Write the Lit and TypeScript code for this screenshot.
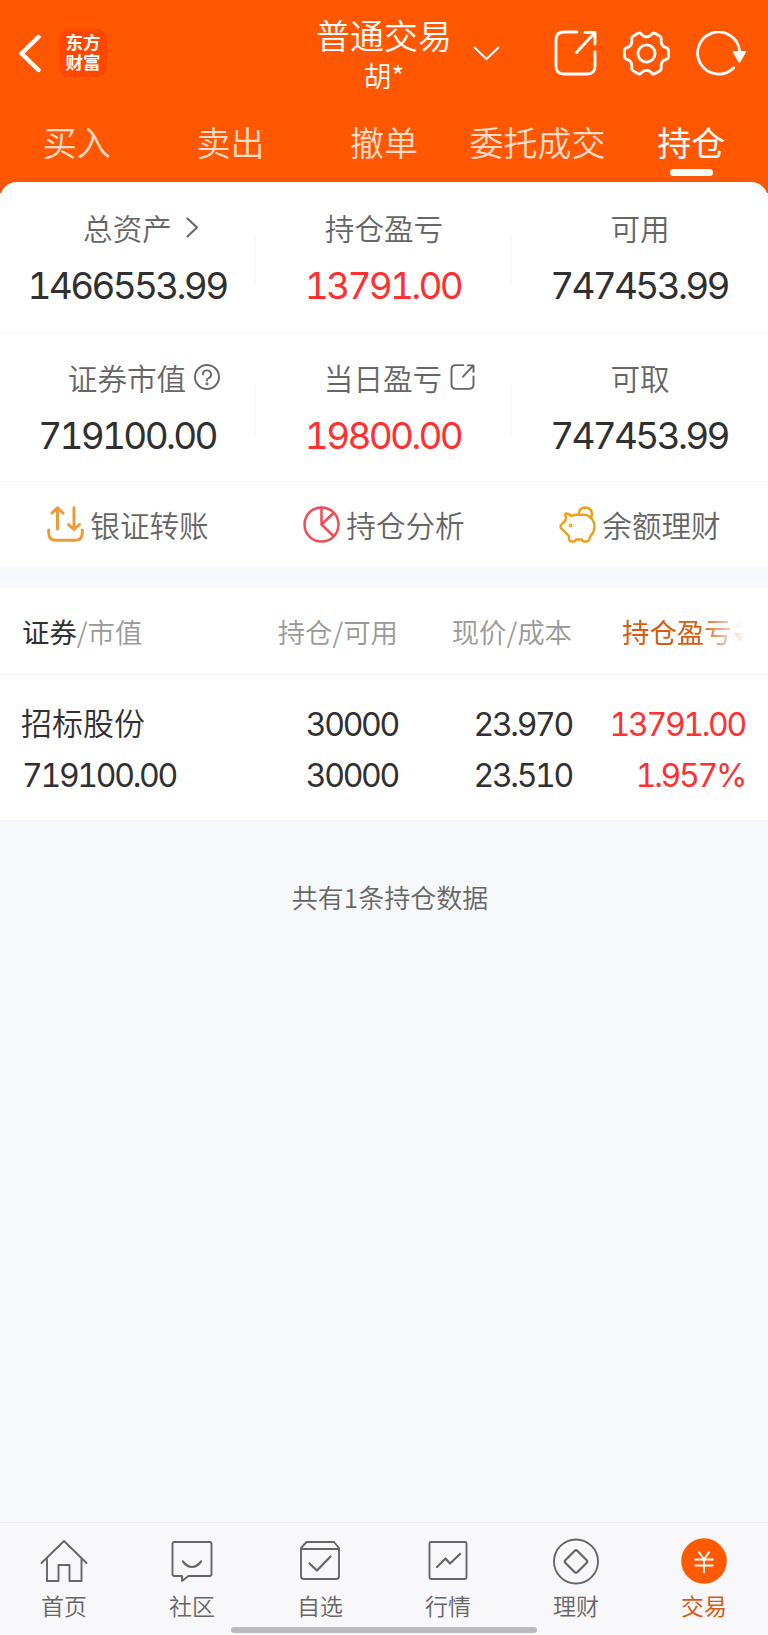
import { LitElement, html, css, svg } from "lit";
import { customElement, property } from "lit/decorators.js";
import { classMap } from "lit/directives/class-map.js";

const stroke = (w: number, body: unknown, box: string, width: number, height: number, cls: string) => html`
  <svg class=${cls} viewBox=${box} width=${width} height=${height} fill="none" stroke="currentColor"
    stroke-width=${w} stroke-linecap="round" stroke-linejoin="round">${body}</svg>`;

const exportShape = svg`<path d="M23 2H10Q2 2 2 10V36Q2 44 10 44H33Q41 44 41 36V22"/><path d="M31 2.5H41V14M40.500 3L22.500 22.500"/>`;

const icons: Record<string, unknown> = {
  back: stroke(4.4, svg`<path d="M20.500 3L3.500 19.500L20.500 36"/>`, "0 0 24 39", 24, 39, "i"),
  down: stroke(2, svg`<path d="M1.500 1.500L13.500 13L25.500 1.500"/>`, "0 0 27 15", 27, 15, "i"),
  share: stroke(2.9, exportShape, "0 0 43 46", 43, 46, "i"),
  gear: stroke(2.9, svg`<path d="M15 2.500Q17.500 1 19 3.500Q24 8.500 29 3.500Q30.500 1 33 2.500L38 5.500Q39.500 7 39 9Q38.500 15.500 44 17Q46.500 18 46.500 20V26Q46.500 28 44 29Q38.500 30.500 39 37Q39.500 39 38 40.500L33 43.500Q30.500 45 29 42.500Q24 37.500 19 42.500Q17.500 45 15 43.500L10 40.500Q8.500 39 9 37Q9.500 30.500 4 29Q1.500 28 1.500 26V20Q1.500 18 4 17Q9.500 15.500 9 9Q8.500 7 10 5.500Z"/><circle cx="24" cy="23" r="8.800"/>`, "0 0 48 46", 47, 45, "i"),
  refresh: stroke(2.8, svg`<path d="M38.500 37.500A21.500 21.500 0 1 1 44.500 20.500"/><path d="M38.500 21.500H50L44.300 31.500Z" fill="currentColor" stroke-width="2"/>`, "0 0 52 46", 51, 45, "i"),
  right: stroke(2.1, svg`<path d="M1.500 1.500L11 10.500L1.500 19.500"/>`, "0 0 13 21", 13, 21, "i"),
  help: stroke(1.9, svg`<circle cx="13" cy="13" r="12"/><path d="M9 10.500A4 4 0 1 1 14.700 14Q13 15 13 16.500"/><circle cx="13" cy="19.800" r=".6"/>`, "0 0 26 26", 26, 26, "i"),
  open: stroke(3.4, exportShape, "0 0 43 46", 25, 26, "i"),
  transfer: stroke(3, svg`<path d="M10.500 23V2.500M5 7L10.500 1.800L16 7M27 1.500V23M21.500 18.500L27 23.500L32.500 18.500M1.700 24V27Q1.700 34.300 9 34.300H28Q35.300 34.300 35.300 27V24"/>`, "0 0 37 36", 37, 36, "i transfer"),
  pie: stroke(2.5, svg`<circle cx="18.500" cy="18.500" r="17"/><path d="M18.500 2V18.500L30.500 30M18.500 18.500L30 7.500"/>`, "0 0 37 37", 37, 37, "i pie"),
  pig: stroke(2.5, svg`<path d="M7 7.500Q10 7.500 12.500 10Q15 8.700 18 8.700H25C32 9 35.500 15 35.500 20.500Q35.500 26 31.500 30Q30 35.500 28 35.500H25Q23.500 35.500 23 33.500H17Q16.500 35.500 15 35.500H11.500Q10 35.500 9.800 30L3.500 23.500Q1.500 22.500 1.500 20.500Q1.500 18.500 3.500 17.500L6.500 14.500Q7.500 12 6.500 9.500Q6 7.500 7 7.500Z"/><path d="M19.500 8Q20.500 1.500 26.500 1.500Q33 2 33 8.500Q32.500 11 31.500 12"/><circle cx="11.500" cy="19.500" r=".7"/>`, "0 0 37 37", 37, 37, "i pig"),
  home: stroke(1.9, svg`<path d="M1.500 25L24 3L46.500 25M7 20V43H18.500V27H29.500V43H41.500V20"/>`, "0 0 48 48", 48, 48, "i"),
  chat: stroke(1.9, svg`<path d="M6.500 4H41.500Q43.500 4 43.500 6V36Q43.500 38 41.500 38H20.500L14 43V38H6.500Q4.500 38 4.500 36V6Q4.500 4 6.500 4Z"/><path d="M15 23.500Q19 29 24 29Q29 29 33 23.500" stroke-width="2.200"/>`, "0 0 48 48", 48, 48, "i"),
  check: stroke(1.9, svg`<path d="M5 12V38Q5 41 8 41H40Q43 41 43 38V10L38 4H10.500L5 10ZM5 11H43"/><path d="M13.500 25.500L21 32.500L34.500 18.500" stroke-width="2.200"/>`, "0 0 48 48", 48, 48, "i"),
  chart: stroke(1.9, svg`<rect x="5.500" y="4" width="37" height="37" rx="1.500"/><path d="M13 29L21.500 20.500L26 25.500L36 16" stroke-width="2.200"/>`, "0 0 48 48", 48, 48, "i"),
  coin: stroke(1.9, svg`<circle cx="24" cy="23.500" r="22"/><path d="M22.500 13Q24 11.500 25.500 13L34.500 22Q36 23.500 34.500 25L25.500 34Q24 35.500 22.500 34L13.500 25Q12 23.500 13.500 22Z" stroke-width="2.200"/>`, "0 0 48 48", 48, 48, "i"),
  yuan: html`<svg class="i" viewBox="0 0 48 48" width="48" height="48" fill="none"><circle cx="24" cy="23" r="22.800" fill="#ff5a00"/><path d="M18.500 13.500L24 21.500L29.500 13.500M14.500 21.500H33.500M14.500 27.500H33.500M24 21.500V35" stroke="#fff" stroke-width="1.900"/></svg>`,
};

const base = css`
  * { box-sizing: border-box; }
  .i { display: block; flex: none; }
`;

@customElement("trade-header")
class TradeHeader extends LitElement {
  static styles = [base, css`
    :host { display: block; background: #ff5702; color: #fff; height: 182px; font-family: "Noto Sans CJK SC", sans-serif; }
    .bar { display: grid; grid-template-columns: 1fr 136px 1fr; height: 106px; }
    .left { display: flex; align-items: center; gap: 16px; padding-left: 18px; }
    .logo { display: grid; place-content: center; width: 48px; height: 48px; border-radius: 10px; background: #ff4700;
      font-size: 17.500px; line-height: 20px; font-weight: 700; text-align: center; margin-left: 1px; padding-bottom: 2px; }
    .title { display: flex; flex-direction: column; align-items: center; padding-top: 13px; white-space: nowrap; font-weight: 350; }
    .main { font-size: 34px; line-height: 44px; }
    .sub { font-size: 28px; line-height: 36px; }
    .right { display: flex; align-items: center; padding-left: 21px; padding-right: 21px; }
    .tools { display: flex; align-items: center; gap: 26px; margin-left: auto; }
    .tabs { display: grid; grid-template-columns: repeat(5, 1fr); padding-top: 14px; }
    .tab { display: flex; flex-direction: column; align-items: center; font-size: 34px; line-height: 44px; color: #ffdcc8; font-weight: 350; white-space: nowrap; }
    .on { color: #fff; font-weight: 400; }
    .line { width: 43px; height: 7px; border-radius: 4px; background: #fff; margin-top: 5px; }
  `];
  render() {
    return html`
      <div class="bar">
        <div class="left">${icons.back}<div class="logo"><span>东方</span><span>财富</span></div></div>
        <div class="title"><span class="main">普通交易</span><span class="sub">胡*</span></div>
        <div class="right">${icons.down}<div class="tools">${icons.share}${icons.gear}${icons.refresh}</div></div>
      </div>
      <div class="tabs">${["买入", "卖出", "撤单", "委托成交", "持仓"].map((t, i) => html`
        <div class=${classMap({ tab: true, on: i === 4 })}>${t}${i === 4 ? html`<div class="line"></div>` : ""}</div>`)}
      </div>`;
  }
}

@customElement("asset-summary")
class AssetSummary extends LitElement {
  static styles = [base, css`
    :host { display: block; background: linear-gradient(#f05808, #f05808) top / 100% 11px no-repeat #fff; font-family: "Noto Sans CJK SC", sans-serif; }
    .card { background: #fff; border-radius: 17px 17px 0 0; }
    .row { display: grid; grid-template-columns: repeat(3, 1fr); height: 151px; border-bottom: 1px solid #f5f5f5; }
    .row + .row { height: 149px; }
    .cell { display: grid; grid-template-rows: 40px 48px; row-gap: 14px; justify-items: center; padding-top: 26px;
      background: linear-gradient(#f7f7f7, #f7f7f7) right 53px / 1px 49px no-repeat; }
    .row + .row .cell { padding-top: 25px; }
    .cell:last-child { background: none; }
    .label { display: flex; align-items: center; font-size: 29.600px; line-height: 40px; color: #666; font-weight: 350; white-space: nowrap; }
    .label.chev { gap: 14px; padding-left: 26px; }
    .label.q { gap: 8px; padding-left: 32px; }
    .label.out { gap: 8px; padding-left: 31px; }
    .label .i { margin-top: -2px; }
    .num { font-family: Inter, sans-serif; font-feature-settings: "tnum"; font-size: 37px; line-height: 48px; letter-spacing: -2.700px; margin-right: 2px; color: #303030; }
    .up { color: #ff3030; }
    .acts { display: grid; grid-template-columns: repeat(3, 1fr); height: 85px; }
    .act { display: flex; align-items: center; justify-content: center; gap: 6px; font-size: 29.600px; line-height: 40px; color: #666; font-weight: 350; }
    .act .i { margin-top: -1px; }
    .transfer { color: #eb9b37; }
    .pie { color: #ee4d55; }
    .pig { color: #eba119; }
  `];
  cells = [
    [["总资产", "1466553.99", "chev"], ["持仓盈亏", "13791.00", ""], ["可用", "747453.99", ""]],
    [["证券市值", "719100.00", "q"], ["当日盈亏", "19800.00", "out"], ["可取", "747453.99", ""]],
  ];
  render() {
    const tail: Record<string, unknown> = { chev: icons.right, q: icons.help, out: icons.open };
    return html`<div class="card">
      ${this.cells.map((r) => html`<div class="row">${r.map(([label, num, kind], i) => html`
        <div class="cell">
          <div class=${"label " + kind}>${label}${tail[kind] ?? ""}</div>
          <div class=${classMap({ num: true, up: i === 1 })}>${num}</div>
        </div>`)}</div>`)}
      <div class="acts">
        <div class="act">${icons.transfer}<span>银证转账</span></div>
        <div class="act">${icons.pie}<span>持仓分析</span></div>
        <div class="act">${icons.pig}<span>余额理财</span></div>
      </div>
    </div>`;
  }
}

@customElement("position-table")
class PositionTable extends LitElement {
  static styles = [base, css`
    :host { display: block; background: #fff; margin-top: 21px; font-family: "Noto Sans CJK SC", sans-serif; border-bottom: 1px solid #f4f4f5; }
    .grid { display: grid; grid-template-columns: 200px 176px 174px 173px; padding: 0 22px; }
    .head { height: 87px; align-items: center; font-size: 27.400px; line-height: 36px; color: #999; font-weight: 350; border-bottom: 1px solid #f4f4f4; }
    .r { text-align: right; }
    .dark { color: #303030; font-weight: 400; }
    .sort { display: flex; align-items: center; gap: 2px; margin-left: 50px; color: #d95a10; font-weight: 400; white-space: nowrap;
      -webkit-mask-image: linear-gradient(90deg, #000 62%, transparent 100%); mask-image: linear-gradient(90deg, #000 62%, transparent 100%); }
    .body { padding-top: 24px; height: 145px; grid-template-rows: 51px 51px; line-height: 51px; font-size: 32px; color: #303030; }
    .n { font-family: Inter, sans-serif; font-feature-settings: "tnum"; letter-spacing: -2.300px; }
    .name { font-size: 31px; margin-top: -3px; margin-left: -1px; font-weight: 350; }
    .up { color: #ff3030; }
  `];
  render() {
    return html`
      <div class="grid head">
        <div><span class="dark">证券</span>/市值</div><div class="r">持仓/可用</div><div class="r">现价/成本</div>
        <div class="sort">持仓盈亏<svg class="i" width="12" height="24" viewBox="0 0 12 24"><path d="M0 9L6 0L12 9Z" fill="#ccc"/><path d="M0 14L6 23L12 14Z" fill="#d95a10"/></svg></div>
      </div>
      <div class="grid body">
        <div class="name">招标股份</div><div class="r n">30000</div><div class="r n">23.970</div><div class="r n up">13791.00</div>
        <div class="n">719100.00</div><div class="r n">30000</div><div class="r n">23.510</div><div class="r n up">1.957%</div>
      </div>`;
  }
}

@customElement("bottom-nav")
class BottomNav extends LitElement {
  @property({ type: Number }) active = 5;
  static styles = [base, css`
    :host { display: block; position: relative; height: 112px; border-top: 1px solid #ededf0; background: #f8f8fb; font-family: "Noto Sans CJK SC", sans-serif; }
    .items { display: grid; grid-template-columns: repeat(6, 1fr); padding-top: 15px; }
    .item { display: flex; flex-direction: column; align-items: center; font-size: 23px; line-height: 32px; color: #666; font-weight: 350; }
    .item span { margin-top: 3px; }
    .on { color: #dc5a14; font-weight: 400; }
    .pill { position: absolute; left: 231px; bottom: 2px; width: 306px; height: 6px; border-radius: 3px; background: #bbbbbd; }
  `];
  render() {
    const items = [["home", "首页"], ["chat", "社区"], ["check", "自选"], ["chart", "行情"], ["coin", "理财"], ["yuan", "交易"]];
    return html`<div class="items">${items.map(([icon, text], i) => html`
      <div class=${classMap({ item: true, on: i === this.active })}>${icons[icon]}<span>${text}</span></div>`)}</div>
      <div class="pill"></div>`;
  }
}

@customElement("app-root")
class AppRoot extends LitElement {
  static styles = css`
    :host { display: flex; flex-direction: column; height: 1635px; background: #f7f8fb; overflow: hidden; }
    .note { flex: 1; padding: 58px 0 0 12px; text-align: center; font: 350 26px/36px "Noto Sans CJK SC", sans-serif; color: #666; }
  `;
  render() {
    return html`<trade-header></trade-header><asset-summary></asset-summary><position-table></position-table>
      <div class="note">共有1条持仓数据</div><bottom-nav></bottom-nav>`;
  }
}
